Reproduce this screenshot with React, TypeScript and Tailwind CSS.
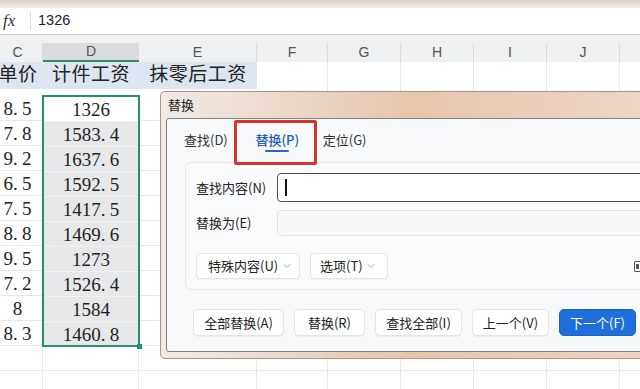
import { ChevronDown } from "lucide-react";

const cVals = ["8.5", "7.8", "9.2", "6.5", "7.5", "8.8", "9.5", "7.2", "8", "8.3"];
const dVals = ["1326", "1583.4", "1637.6", "1592.5", "1417.5", "1469.6", "1273", "1526.4", "1584", "1460.8"];

const cellFont = { fontFamily: '"Liberation Serif", "Noto Sans CJK SC", serif' };

function Num({ v }: { v: string }) {
  const [a, b] = v.split(".");
  return (
    <span>
      {a}
      {b !== undefined && (
        <>
          <span className="inline-block w-[9px] text-left">.</span>
          {b}
        </>
      )}
    </span>
  );
}

type ColProps = {
  letter: string;
  w: string;
  title?: string;
  blue?: boolean;
  values?: string[];
};

function GridCol({ letter, w, title, blue, values }: ColProps) {
  return (
    <div className={`flex shrink-0 flex-col ${w}`}>
      <div className="h-[8px] bg-[#eef0f2]" />
      <div className="flex h-[19px] items-center justify-center border-r border-[#d9dcdf] bg-[#eef0f2] text-[14px] text-[#555]">
        {letter}
      </div>
      <div
        className={`flex h-[27px] items-center justify-center text-[19px] tracking-[0.5px] text-[#222] ${
          blue ? "bg-[#dde6f0]" : "border-r border-[#e6e8ea] bg-white"
        }`}
        style={cellFont}
      >
        {title}
      </div>
      <div className={`h-[7px] bg-white ${blue ? "" : "border-r border-[#e6e8ea]"}`} />
      {Array.from({ length: 12 }).map((_, i) => (
        <div
          key={i}
          className="flex h-[25px] shrink-0 items-center justify-center border-b border-r border-[#e6e8ea] pt-[3px] text-[19px] text-[#222]"
          style={cellFont}
        >
          {values && values[i] !== undefined ? <Num v={values[i]} /> : null}
        </div>
      ))}
    </div>
  );
}

function SelectedCol() {
  return (
    <div className="flex w-[96px] shrink-0 flex-col">
      <div className="h-[8px] bg-[#eef0f2]" />
      <div className="flex h-[19px] items-center justify-center border-b-2 border-[#2a8d6d] bg-[#d9dbdd] text-[14px] text-[#555]">
        D
      </div>
      <div
        className="flex h-[27px] items-center justify-center bg-[#dde6f0] text-[19px] tracking-[0.5px] text-[#222]"
        style={cellFont}
      >
        计件工资
      </div>
      <div className="h-[7px] bg-white" />
      <div className="relative flex flex-col outline-2 -outline-offset-1 outline-[#23906e]">
        {dVals.map((v, i) => (
          <div
            key={v}
            className={`flex h-[25px] items-center justify-center pt-[3px] text-[19px] text-[#1f1f1f] ${
              i === 0 ? "bg-white" : "border-t border-[#f1f1f1] bg-[#e7e8e9]"
            }`}
            style={cellFont}
          >
            <Num v={v} />
          </div>
        ))}
        <div className="absolute -bottom-[3px] -right-[3px] h-[5px] w-[5px] bg-[#23906e]" />
      </div>
      <div className="h-[25px] border-b border-r border-[#e6e8ea]" />
      <div className="h-[25px] border-b border-r border-[#e6e8ea]" />
    </div>
  );
}

function Btn({ children, w, primary }: { children: React.ReactNode; w: string; primary?: boolean }) {
  return (
    <div
      className={`flex h-[27px] items-center justify-center rounded-[5px] border text-[13px] ${w} ${
        primary
          ? "border-[#1a63c6] bg-[#1e6fd9] text-white"
          : "border-[#e3e5e8] bg-white text-[#222] shadow-[0_1px_1px_rgba(0,0,0,0.05)]"
      }`}
    >
      {children}
    </div>
  );
}

function Dialog() {
  return (
    <div
      className="absolute left-[160px] top-[91px] flex h-[268px] w-[500px] flex-col rounded-[5px] border border-[#b2917d] bg-gradient-to-r from-[#efebe8] via-[#e7c5ab] to-[#eed6c6] text-[#222]"
      style={{ fontFamily: '"Noto Sans CJK SC", "Noto Sans", sans-serif' }}
    >
      <div className="flex h-[26px] items-center pl-[7px] text-[13px] text-[#222]">替换</div>
      <div className="mb-[6px] ml-[5px] flex flex-1 flex-col rounded-[3px] border border-[#808080] bg-[#f7f9fb]">
        {/* tabs */}
        <div className="flex h-[43px] items-start text-[13px]">
          <div className="ml-[17px] pt-[11px] leading-[19px] text-[#333]">查找(D)</div>
          <div className="relative z-10 ml-[6px] mt-[1px] flex h-[45px] w-[83px] flex-col items-center rounded-[2px] border-[3px] border-[#d8342b] pl-[4px] pt-[7px]">
            <div className="font-medium leading-[19px] text-[#1d5fb8]">替换(P)</div>
            <div className="mt-[1px] h-[2px] w-[24px] rounded-full bg-[#2a67c0]" />
          </div>
          <div className="ml-[6px] pt-[11px] leading-[19px] text-[#333]">定位(G)</div>
        </div>
        {/* group panel */}
        <div className="ml-[18px] flex h-[128px] w-[470px] flex-col rounded-[6px] border border-[#e5e7ea] bg-[#fafbfc] pl-[10px] text-[13px]">
          <div className="mt-[10px] flex h-[29px] items-center">
            <div className="w-[81px]">查找内容(N)</div>
            <div className="flex h-[29px] flex-1 items-center rounded-[4px] border border-[#4d4d4d] bg-white pl-[7px]">
              <div className="h-[17px] w-[1.5px] bg-[#111]" />
            </div>
          </div>
          <div className="mt-[8px] flex h-[26px] items-center">
            <div className="w-[81px]">替换为(E)</div>
            <div className="h-[26px] flex-1 rounded-[4px] border border-[#e1e3e6] bg-[#f6f8fa]" />
          </div>
          <div className="mt-[17px] flex h-[26px] items-center">
            <div className="flex h-[26px] w-[104px] items-center justify-between rounded-[4px] border border-[#e3e5e8] bg-white pl-[11px] pr-[6px] shadow-[0_1px_1px_rgba(0,0,0,0.04)]">
              <span>特殊内容(U)</span>
              <ChevronDown size={12} strokeWidth={1.5} color="#8a8a8a" />
            </div>
            <div className="ml-[10px] flex h-[26px] w-[78px] items-center justify-between rounded-[4px] border border-[#e3e5e8] bg-white pl-[9px] pr-[10px] shadow-[0_1px_1px_rgba(0,0,0,0.04)]">
              <span>选项(T)</span>
              <ChevronDown size={12} strokeWidth={1.5} color="#8a8a8a" />
            </div>
            <div className="ml-[246px] flex h-[11px] w-[12px] items-center rounded-[1px] border-[1.5px] border-[#555] pl-[1px]">
              <div className="h-[5px] w-[3px] bg-[#555]" />
            </div>
          </div>
        </div>
        {/* bottom buttons */}
        <div className="ml-[26px] mt-[19px] flex gap-[10px]">
          <Btn w="w-[91px]">全部替换(A)</Btn>
          <Btn w="w-[71px]">替换(R)</Btn>
          <Btn w="w-[87px]">查找全部(I)</Btn>
          <Btn w="w-[77px]">上一个(V)</Btn>
          <Btn w="w-[77px]" primary>
            下一个(F)
          </Btn>
        </div>
      </div>
    </div>
  );
}

export default function App() {
  return (
    <div
      className="relative h-[389px] w-[640px] overflow-hidden bg-white"
      style={{ fontFamily: '"Liberation Sans", "Noto Sans CJK SC", sans-serif' }}
    >
      <div className="h-[8px] bg-gradient-to-b from-[#d9d3cc] to-[#efebe7]" />
      {/* formula bar */}
      <div className="flex h-[27px] items-center border-b border-[#c8cacd] bg-white">
        <span
          className="ml-[3px] w-[24px] text-[17px] italic text-[#333]"
          style={{ fontFamily: '"Liberation Serif", serif' }}
        >
          fx
        </span>
        <div className="ml-[3px] h-[18px] w-px bg-[#dcdcdc]" />
        <span className="ml-[7px] text-[14.5px] text-[#222]">1326</span>
      </div>
      {/* grid */}
      <div className="flex">
        <div className="-ml-[7px] flex">
          <GridCol letter="C" w="w-[50px]" title="单价" blue values={cVals} />
        </div>
        <SelectedCol />
        <GridCol letter="E" w="w-[118px]" title="抹零后工资" blue />
        <GridCol letter="F" w="w-[71px]" />
        <GridCol letter="G" w="w-[73px]" />
        <GridCol letter="H" w="w-[73px]" />
        <GridCol letter="I" w="w-[73px]" />
        <GridCol letter="J" w="w-[73px]" />
        <GridCol letter="" w="w-[40px]" />
      </div>
      <Dialog />
    </div>
  );
}
